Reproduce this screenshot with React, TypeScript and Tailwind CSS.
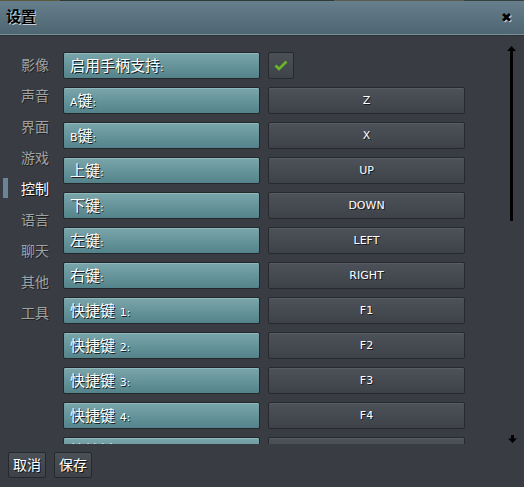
import React from 'react';

const font = { fontFamily: '"DejaVu Sans", "Noto Sans CJK SC", sans-serif' };

const tabs = ['影像', '声音', '界面', '游戏', '控制', '语言', '聊天', '其他', '工具'];

const rows: { label: string; value: string | null }[] = [
  { label: '启用手柄支持:', value: null },
  { label: 'A键:', value: 'Z' },
  { label: 'B键:', value: 'X' },
  { label: '上键:', value: 'UP' },
  { label: '下键:', value: 'DOWN' },
  { label: '左键:', value: 'LEFT' },
  { label: '右键:', value: 'RIGHT' },
  { label: '快捷键 1:', value: 'F1' },
  { label: '快捷键 2:', value: 'F2' },
  { label: '快捷键 3:', value: 'F3' },
  { label: '快捷键 4:', value: 'F4' },
  { label: '快捷键 5:', value: 'F5' },
];

const shadow = '[text-shadow:1px_1px_0_#1c2224]';

function Label({ text }: { text: string }) {
  // ascii parts render smaller than the CJK glyphs
  const parts = text.split(/([A-Za-z0-9:]+)/).filter(Boolean);
  return (
    <div className="w-[197px] h-[27px] shrink-0 rounded-[2px] border border-[#23282b] bg-gradient-to-b from-[#7aa6ab] to-[#54838b] shadow-[inset_0_1px_0_#8fb9bd] flex items-center pt-[2px] px-[6px] text-white">
      <span className={`text-[15px] leading-none ${shadow}`}>
        {parts.map((p, i) =>
          /^[A-Za-z0-9:]+$/.test(p) ? (
            <span key={i} className="text-[11px]">{p}</span>
          ) : (
            <span key={i}>{p}</span>
          )
        )}
      </span>
    </div>
  );
}

function Value({ value }: { value: string | null }) {
  if (value === null) {
    return (
      <div className="w-[26px] h-[27px] rounded-[2px] border border-[#26292d] bg-gradient-to-b from-[#4b5057] to-[#3f4349] flex items-center justify-center">
        <svg width="14" height="11" viewBox="0 0 14 11">
          <path d="M1.5 5.5 L5 9 L12.5 1.5" stroke="#6cb52a" strokeWidth="2.6" fill="none" />
        </svg>
      </div>
    );
  }
  return (
    <div className="w-[197px] h-[27px] rounded-[2px] border border-[#26292d] bg-gradient-to-b from-[#4d525a] to-[#3e4248] shadow-[inset_0_1px_0_#585d64] flex items-center justify-center pt-[1px] text-white text-[11px] [text-shadow:1px_1px_0_#1a1c1f]">
      {value}
    </div>
  );
}

export default function App() {
  return (
    <div className="w-[524px] h-[487px] flex flex-col bg-[#393c42] overflow-hidden" style={font}>
      <div className="h-[1px] flex shrink-0">
        <div className="w-[60px] bg-[#5c5a3c]" />
        <div className="flex-1 bg-[#2f3a36]" />
        <div className="w-[130px] bg-[#5a5e52]" />
        <div className="w-[60px] bg-[#36413f]" />
      </div>
      <div className="h-[34px] shrink-0 flex items-center justify-between pl-[6px] pr-[12px] bg-gradient-to-b from-[#677f8c] to-[#4e6572] border-b border-[#7a919c]">
        <span className="text-[15px] font-bold text-black [text-shadow:1px_1px_0_#c9d3d8]">设置</span>
        <span className="text-[13px] font-bold text-black [text-shadow:1px_1px_0_#c9d3d8]">✖</span>
      </div>
      <div className="h-[1px] bg-[#2e3135] shrink-0" />
      <div className="h-[408px] shrink-0 flex overflow-hidden">
        <div className="w-[63px] shrink-0 pt-[14px] flex flex-col">
          {tabs.map((t) => (
            <div key={t} className="h-[31px] flex items-center relative">
              {t === '控制' && <div className="absolute left-[3px] top-[4px] w-[5px] h-[20px] bg-[#6a8596]" />}
              <span
                className={`ml-[21px] text-[14px] ${
                  t === '控制' ? 'text-white [text-shadow:1px_1px_0_#111]' : 'text-[#9da2a6] [text-shadow:1px_1px_0_#222]'
                }`}
              >
                {t}
              </span>
            </div>
          ))}
        </div>
        <div className="pt-[16px] flex flex-col gap-[8px]">
          {rows.map((r) => (
            <div key={r.label} className="flex gap-[8px]">
              <Label text={r.label} />
              <Value value={r.value} />
            </div>
          ))}
        </div>
        <div className="flex-1" />
        <div className="w-[14px] mr-[6px] flex flex-col items-center pt-[10px] pb-[1px]">
          <svg width="9" height="9" viewBox="0 0 9 9">
            <path d="M4.5 0 L9 5 L6 5 L6 9 L3 9 L3 5 L0 5 Z" fill="#000" />
          </svg>
          <div className="w-[3px] h-[166px] bg-black" />
          <div className="flex-1" />
          <svg width="9" height="8" viewBox="0 0 9 8" className="ml-[3px]">
            <path d="M3 0 L6 0 L6 3.5 L9 3.5 L4.5 8 L0 3.5 L3 3.5 Z" fill="#000" />
          </svg>
        </div>
      </div>
      <div className="flex gap-[8px] pl-[8px] pt-[8px]">
        {['取消', '保存'].map((b) => (
          <div
            key={b}
            className="w-[38px] h-[26px] rounded-[2px] border border-[#25282c] bg-gradient-to-b from-[#4b5057] to-[#3e4248] flex items-center justify-center text-white text-[14px] [text-shadow:1px_1px_0_#111]"
          >
            {b}
          </div>
        ))}
      </div>
    </div>
  );
}
